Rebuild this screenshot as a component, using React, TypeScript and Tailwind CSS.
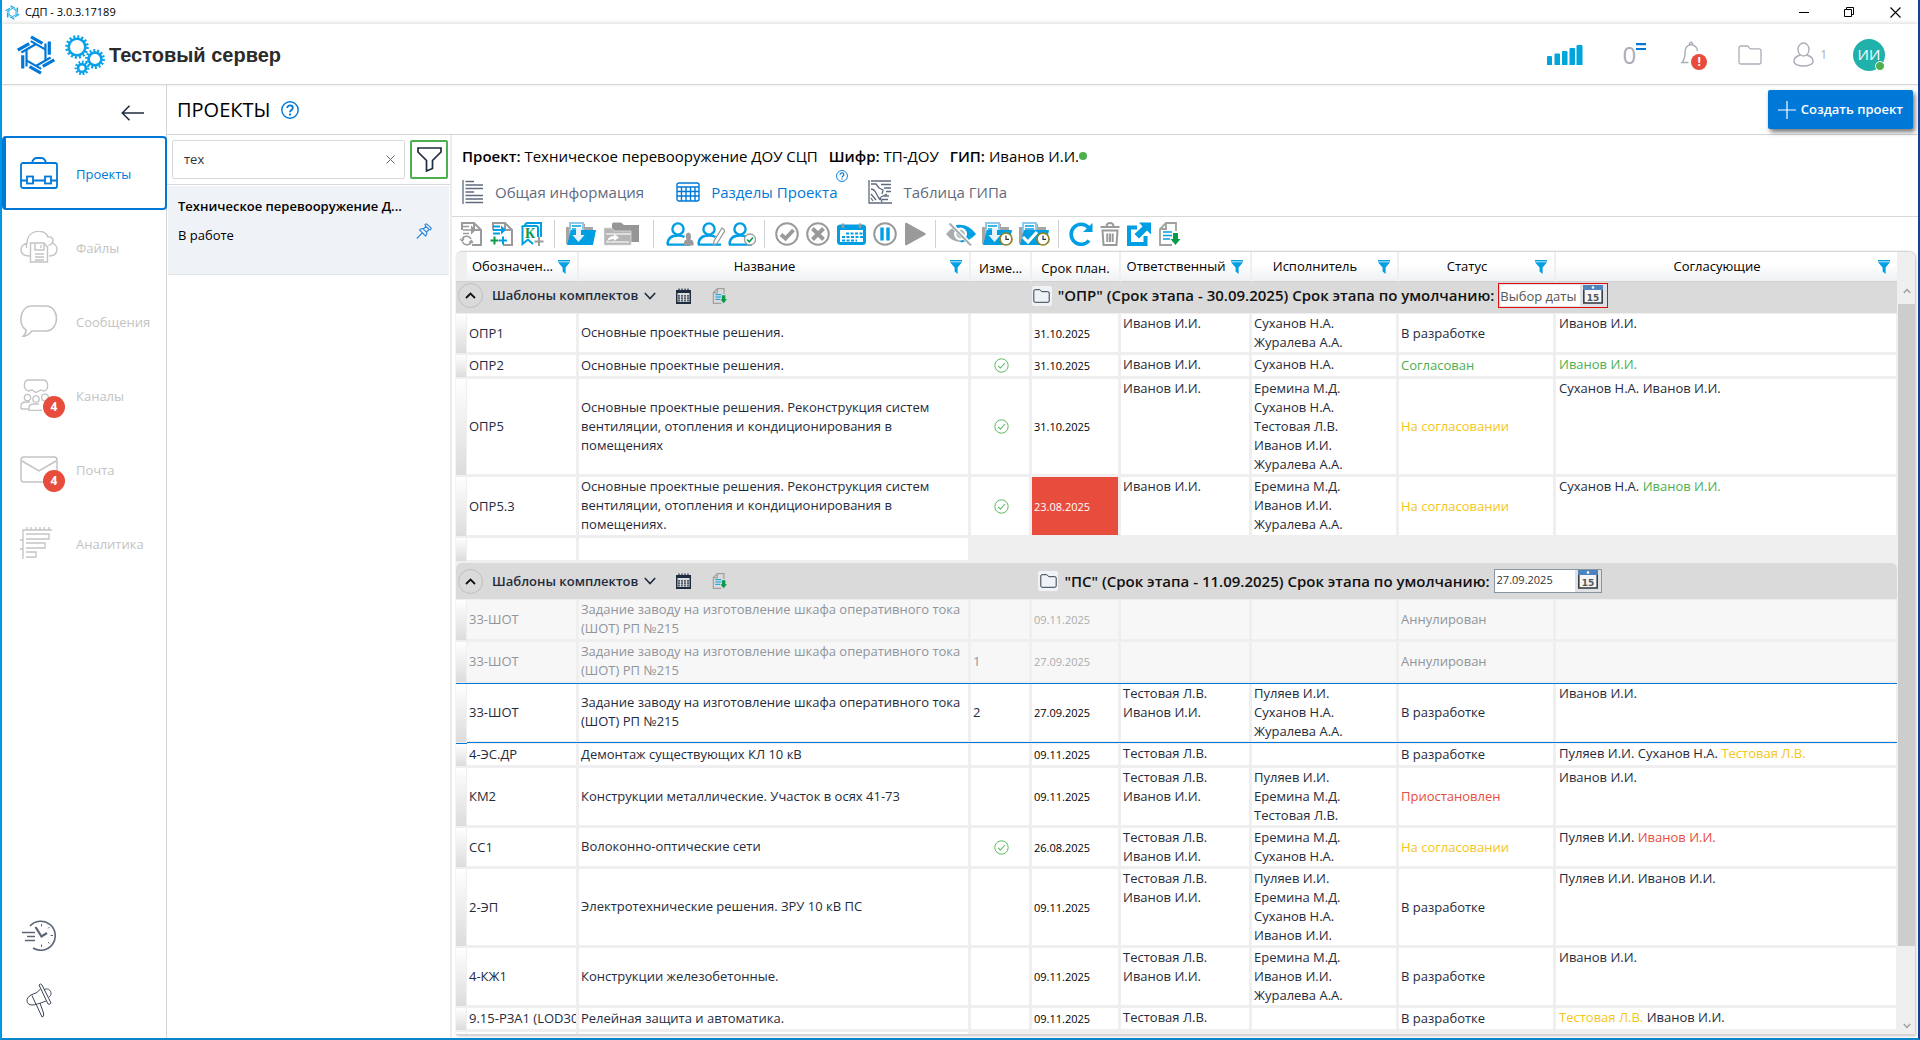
import { useState } from "react";
import type { ReactNode } from "react";

// Project sections screen: side nav, project list, sections table grouped by stage.

type Tone = "ok" | "wait" | "bad";
type Person = [string, Tone?];

interface Section {
  code: string;
  title: string;
  change?: string;
  approved?: boolean;
  due: string;
  overdue?: boolean;
  owners: string[];
  workers: string[];
  status: string;
  statusTone?: Tone;
  approvers: Person[];
  cancelled?: boolean;
  selected?: boolean;
}

const TONE: Record<Tone, string> = {
  ok: "text-[#4caf50]",
  wait: "text-[#f5c518]",
  bad: "text-[#e84c3d]",
};

const IV = "Иванов И.И.";
const SU = "Суханов Н.А.";
const ZH = "Журалева А.А.";
const ER = "Еремина М.Д.";
const TE = "Тестовая Л.В.";
const PU = "Пуляев И.И.";

const OPR: Section[] = [
  { code: "ОПР1", title: "Основные проектные решения.", due: "31.10.2025", owners: [IV], workers: [SU, ZH], status: "В разработке", approvers: [[IV]] },
  { code: "ОПР2", title: "Основные проектные решения.", approved: true, due: "31.10.2025", owners: [IV], workers: [SU], status: "Согласован", statusTone: "ok", approvers: [[IV, "ok"]] },
  { code: "ОПР5", title: "Основные проектные решения. Реконструкция систем вентиляции, отопления и кондиционирования в помещениях", approved: true, due: "31.10.2025", owners: [IV], workers: [ER, SU, TE, IV, ZH], status: "На согласовании", statusTone: "wait", approvers: [[SU], [IV]] },
  { code: "ОПР5.3", title: "Основные проектные решения. Реконструкция систем вентиляции, отопления и кондиционирования в помещениях.", approved: true, due: "23.08.2025", overdue: true, owners: [IV], workers: [ER, IV, ZH], status: "На согласовании", statusTone: "wait", approvers: [[SU], [IV, "ok"]] },
];

const SHOT = "Задание заводу на изготовление шкафа оперативного тока (ШОТ) РП №215";

const PS: Section[] = [
  { code: "33-ШОТ", title: SHOT, due: "09.11.2025", owners: [], workers: [], status: "Аннулирован", approvers: [], cancelled: true },
  { code: "33-ШОТ", title: SHOT, change: "1", due: "27.09.2025", owners: [], workers: [], status: "Аннулирован", approvers: [], cancelled: true },
  { code: "33-ШОТ", title: SHOT, change: "2", due: "27.09.2025", owners: [TE, IV], workers: [PU, SU, ZH], status: "В разработке", approvers: [[IV]], selected: true },
  { code: "4-ЭС.ДР", title: "Демонтаж существующих КЛ 10 кВ", due: "09.11.2025", owners: [TE], workers: [], status: "В разработке", approvers: [[PU], [SU], [TE, "wait"]] },
  { code: "КМ2", title: "Конструкции металлические. Участок в осях 41-73", due: "09.11.2025", owners: [TE, IV], workers: [PU, ER, TE], status: "Приостановлен", statusTone: "bad", approvers: [[IV]] },
  { code: "СС1", title: "Волоконно-оптические сети", approved: true, due: "26.08.2025", owners: [TE, IV], workers: [ER, SU], status: "На согласовании", statusTone: "wait", approvers: [[PU], [IV, "bad"]] },
  { code: "2-ЭП", title: "Электротехнические решения. ЗРУ 10 кВ ПС", due: "09.11.2025", owners: [TE, IV], workers: [PU, ER, SU, IV], status: "В разработке", approvers: [[PU], [IV]] },
  { code: "4-КЖ1", title: "Конструкции железобетонные.", due: "09.11.2025", owners: [TE, IV], workers: [ER, IV, ZH], status: "В разработке", approvers: [[IV]] },
  { code: "9.15-РЗА1 (LOD300)", title: "Релейная защита и автоматика.", due: "09.11.2025", owners: [TE], workers: [], status: "В разработке", approvers: [[TE, "wait"], [IV]] },
];

// ---------- icons ----------

const TURNS = [0, 60, 120, 180, 240, 300];

// six identical blades, each one overhanging the previous
function Logo({ className }: { className: string }) {
  return (
    <svg viewBox="-20 -20 40 40" className={className} fill="none" stroke="currentColor" aria-hidden="true">
      {TURNS.map((a) => (
        <g key={a} transform={`rotate(${a})`}>
          <path d="M-5 -18.2 L6.5 -11.6" strokeWidth="3.2" />
          <path d="M-5.2 -13.9 L9.6 -5.4" strokeWidth="2.2" />
        </g>
      ))}
    </svg>
  );
}

function Gear({ cx, cy, r, teeth }: { cx: number; cy: number; r: number; teeth: number }) {
  const step = (2 * Math.PI * (r + 2)) / teeth;
  return (
    <g>
      <circle cx={cx} cy={cy} r={r} strokeWidth="2.6" />
      <circle cx={cx} cy={cy} r={r + 2} strokeWidth="3" strokeDasharray={`${step * 0.5} ${step * 0.5}`} />
    </g>
  );
}

function Gears() {
  return (
    <svg viewBox="0 0 40 40" className="size-10" fill="none" stroke="#0aa1e8" aria-hidden="true">
      <Gear cx={12} cy={12} r={8.3} teeth={16} />
      <Gear cx={30} cy={24} r={6.4} teeth={14} />
      <Gear cx={17} cy={33} r={3.9} teeth={11} />
    </svg>
  );
}

function Ic({ w, h = 24, children, stroke = "none", sw = 2 }: { w: number; h?: number; children: ReactNode; stroke?: string; sw?: number }) {
  return (
    <svg width={w} height={h} viewBox={`0 0 ${w} ${h}`} fill="none" stroke={stroke} strokeWidth={sw} aria-hidden="true" className="shrink-0">
      {children}
    </svg>
  );
}

const G = "#9a9a9a";
const B = "#009fe3";
const D = "#1f2c3d";

function Help({ size }: { size: number }) {
  return (
    <svg width={size} height={size} viewBox="0 0 18 18" fill="none" stroke="#0078d7" aria-hidden="true">
      <circle cx="9" cy="9" r="8.2" strokeWidth="1.4" />
      <path d="M6.2 7 C6.2 3.6 11.8 3.6 11.8 7 C11.8 8.9 9 9 9 11.2" strokeWidth="1.8" />
      <path d="M9 12.6 V14.4" strokeWidth="1.9" />
    </svg>
  );
}

function Funnel() {
  return (
    <svg width="12" height="14" viewBox="0 0 12 14" fill={B} aria-hidden="true" className="shrink-0">
      <path d="M0 0 H12 V1.4 H0 Z M0 2.2 H12 L7.6 7.4 V14 L4.6 11.6 V7.4 Z" />
    </svg>
  );
}

function FolderOutline({ w, h, color }: { w: number; h: number; color: string }) {
  return (
    <svg width={w} height={h} viewBox="0 0 24 20" fill="none" stroke={color} strokeWidth="1.3" aria-hidden="true">
      <path d="M1 3 Q1 1 3 1 H9 Q10.5 1 11 2.4 Q11.6 3.8 13 3.8 H21 Q23 3.8 23 5.8 V17 Q23 19 21 19 H3 Q1 19 1 17 Z" />
    </svg>
  );
}

function PageCorner({ color }: { color: string }) {
  return <path d="M3 8 V1 H15 L22 8 V23 H13 M15 1 V8 H22" stroke={color} strokeWidth="2" />;
}

function FolderDoc({ w, check }: { w: number; check?: boolean }) {
  return (
    <Ic w={w}>
      <path d="M1 5 H5 V2 H20 V5 H28 V22 H1 Z" fill="#a5a5a5" />
      <path d="M5 1 H18 V10 H5 Z" fill="#fff" stroke="#8cc9ea" />
      <path d="M7 4 H16 M7 7 H16" stroke={B} strokeWidth="1.6" />
      <path d="M6 8 H31 L28 23 H2 Z" fill={B} />
      {check ? (
        <path d="M5 15 L10 20 L19 10" stroke="#fff" strokeWidth="3" />
      ) : (
        <path d="M11 6 H16 V13 H19.5 L13.5 20 L7.5 13 H11 Z" fill="#e8f4fb" />
      )}
    </Ic>
  );
}

function ClockBadge({ children }: { children: ReactNode }) {
  return (
    <span className="relative">
      {children}
      <svg width="14" height="14" viewBox="0 0 14 14" fill="#fff" stroke="#8c8226" className="absolute right-0 bottom-0" aria-hidden="true">
        <circle cx="7" cy="7" r="6" strokeWidth="1.7" />
        <path d="M7 3.5 V7.4 H10" stroke="#333" strokeWidth="1.2" />
      </svg>
    </span>
  );
}

function UserBlue({ children }: { children: ReactNode }) {
  return (
    <Ic w={28} stroke={B} sw={2.4}>
      <circle cx="12" cy="7" r="5.6" />
      <path d="M1.5 22.5 C1.5 16 5 13.5 12 13.5 C15 13.5 17 14 18.5 15 M1 22.6 H24" />
      {children}
    </Ic>
  );
}

function DocDown({ size }: { size: number }) {
  return (
    <svg width={size} height={size} viewBox="0 0 22 24" fill="none" aria-hidden="true" className="shrink-0">
      <path d="M17 9 V1 H7 L1 7 V23 H13 M7 1 V7 H1" stroke="#a0a0a0" strokeWidth="1.8" />
      <path d="M4 10 H13 M4 13.5 H13 M4 17 H11" stroke={B} strokeWidth="1.5" />
      <path d="M14 11 H19 V17 H21.5 L16.5 23 L11.5 17 H14 Z" fill="#0a9a4a" />
    </svg>
  );
}

function CalendarDark() {
  return (
    <Ic w={15} h={16}>
      <path d="M0.5 3 H14.5 V15 H0.5 Z" fill="#dbdbdb" stroke={D} />
      <path d="M0 2 H15 V5 H0 Z" fill={D} />
      <path d="M3 0.5 V3 M6 0.5 V3 M9 0.5 V3 M12 0.5 V3" stroke={D} strokeWidth="1.2" />
      <path d="M3 7 V13.5 M6 7 V13.5 M9 7 V13.5 M12 7 V13.5" stroke={D} strokeWidth="1.4" strokeDasharray="1.8 0.5" />
    </Ic>
  );
}

function ApprovedMark() {
  return (
    <svg width="15" height="15" viewBox="0 0 15 15" fill="none" stroke="#5cb860" className="mx-auto" role="img" aria-label="Согласовано">
      <circle cx="7.5" cy="7.5" r="6.7" strokeWidth="1" />
      <path d="M4 7.8 L6.4 10 L11 5" strokeWidth="1.1" />
    </svg>
  );
}

// ---------- side nav ----------

const NAV_ICONS: Record<string, ReactNode> = {
  projects: (
    <Ic w={38} h={32} stroke="currentColor" sw={1.8}>
      <rect x="1" y="6" width="36" height="25" rx="2" />
      <path d="M12 6 Q13 1 17 1 H21 Q25 1 26 6 M1 23.5 H7 M13 23.5 H25 M31 23.5 H37" />
      <rect x="7" y="19.5" width="6" height="7" />
      <rect x="25" y="19.5" width="6" height="7" />
    </Ic>
  ),
  files: (
    <Ic w={38} h={32} stroke="currentColor" sw={1.4}>
      <path d="M10 25 C-2 25 -1 13 7 12.5 C7 -2 25 -3 28 6 C33 5 34 10 32 12 C39 14 39 25 29 25 M7 12.5 C6 14 6 15.500 7 17 M32 12 Q31 14 28.500 14.500" />
      <path d="M10.500 12 H24 L27.500 16 V31 H10.500 Z M15 12 V19 H24 V12 M21 14 V17 M15 23 H24 M15 26 H24 M15 29 H24" />
    </Ic>
  ),
  messages: (
    <Ic w={38} h={32} stroke="currentColor" sw={1.6}>
      <path d="M12 1 H26 C40 1 40 26 26 26 H12 Q8 31 3 31.5 Q6 29 6 25 C-2 21 -1 1 12 1 Z" />
    </Ic>
  ),
  channels: (
    <Ic w={38} h={32} stroke="currentColor" sw={1.3}>
      <path d="M9 1 H23 C29 1 29 11 24 12 L21 11 L16 13.5 L12 11 L8 12 C3 10 3 1 9 1 Z" />
      <circle cx="7.5" cy="18.5" r="3.2" />
      <circle cx="16" cy="20" r="3.2" />
      <circle cx="25" cy="18.5" r="3.4" />
      <path d="M1 30 V27 Q1 23 6 23 H10 M1 30 H9 M9 32 V29 Q9 25 14 25 H19 M9 31.4 H22" />
    </Ic>
  ),
  mail: (
    <Ic w={38} h={27} stroke="currentColor" sw={1.5}>
      <rect x="1" y="1" width="36" height="25" rx="3" />
      <path d="M2 5 L19 15 L36 5" />
    </Ic>
  ),
  analytics: (
    <Ic w={38} h={32} stroke="currentColor" sw={1.3}>
      <path d="M3 32 V3 H32 M7 0 V3 M11 0 V3 M16 0 V3 M20 0 V3 M24 0 V3 M29 0 V3 M0 13 H3 M0 22 H3" />
      <path d="M6 7 H29 V12 H6 M6 16 H25 V21 H6 M6 25 H16 V30 H6" />
    </Ic>
  ),
};

const NAV = [
  { id: "projects", label: "Проекты" },
  { id: "files", label: "Файлы" },
  { id: "messages", label: "Сообщения" },
  { id: "channels", label: "Каналы", badge: 4 },
  { id: "mail", label: "Почта", badge: 4 },
  { id: "analytics", label: "Аналитика" },
];

function SideNav() {
  const [active, setActive] = useState("projects");
  return (
    <nav className="flex w-[165px] shrink-0 flex-col border-r border-[#d5d5d5]">
      <div className="flex h-[51px] items-center justify-end pt-1 pr-[22px]">
        <button type="button" aria-label="Свернуть меню">
          <Ic w={23} h={16} stroke={D} sw={1.6}>
            <path d="M23 8 H1.5 M8.5 0.8 L1.3 8 L8.5 15.2" />
          </Ic>
        </button>
      </div>
      {NAV.map((n) => (
        <button
          key={n.id}
          type="button"
          onClick={() => setActive(n.id)}
          className={
            "-mr-px flex h-[74px] items-center text-[13px] " +
            (active === n.id
              ? "rounded border-2 border-l-4 border-[#0078d7] pl-[14px] text-[#0078d7]"
              : "pl-[18px] text-[#c3c3c3]")
          }
        >
          <span className="relative flex h-8 w-[56px] items-center">
            {NAV_ICONS[n.id]}
            {n.badge && (
              <span className="absolute top-[17px] left-[23px] flex size-[22px] items-center justify-center rounded-full bg-[#e84c3d] text-xs font-bold text-white">
                {n.badge}
              </span>
            )}
          </span>
          <span className="pt-[3px]">{n.label}</span>
        </button>
      ))}
      <div className="mt-auto flex flex-col items-start gap-8 pb-5 pl-5">
        <button type="button" aria-label="История">
          <Ic w={36} h={31} stroke="#5b6577" sw={1.6}>
            <path d="M8 6 A14.5 14.5 0 1 1 11 28" />
            <path d="M0 12.5 H13 M5 16.5 H13 M3 20.5 H13" />
            <path d="M13.5 7 L19.5 16.5 L25 13" strokeWidth="2.2" />
            <path d="M19.5 4 V6.5 M19.5 24.5 V27 M28.5 15.5 H31 M26 8.5 L27.5 7 M26 22 L27.5 23.5" strokeWidth="1" />
          </Ic>
        </button>
        <button type="button" aria-label="Новости" className="pl-1">
          <Ic w={27} h={35} stroke="#3b4657" sw={1}>
            <path d="M13 2 Q14.5 0 16 2 L25 20 Q24 22 22 21 Z M14.5 6 Q12 10 5 12 C-1 15 0 22 6 22 Q10 22 20 18 M6 12.5 L10 21.5" />
            <path d="M18 7 C23 3 28 11 23 14" />
            <path d="M10 21 L16 34 Q18.5 34 17.5 30 L14 20" />
          </Ic>
        </button>
      </div>
    </nav>
  );
}

// ---------- top bars ----------

function TitleBar() {
  return (
    <div className="flex h-6 items-center pl-[3px]">
      <Logo className="size-[15px] text-[#13a9e8]" />
      <span className="pl-[5px] text-[11px] text-black">СДП - 3.0.3.17189</span>
      <div className="ml-auto flex items-center gap-[35px] pr-[17px]">
        <button type="button" aria-label="Свернуть"><Ic w={10} h={11} stroke="#000" sw={1}><path d="M0 5.5 H10" /></Ic></button>
        <button type="button" aria-label="Восстановить"><Ic w={11} h={11} stroke="#000" sw={1}><path d="M0.5 2.5 H7.5 V9.5 H0.5 Z M2.5 2.5 V0.5 H9.5 V7.5 H7.5" /></Ic></button>
        <button type="button" aria-label="Закрыть"><Ic w={11} h={11} stroke="#000" sw={1.1}><path d="M0.5 0.5 L10.5 10.5 M10.5 0.5 L0.5 10.5" /></Ic></button>
      </div>
    </div>
  );
}

function Header() {
  return (
    <header className="z-10 flex h-[61px] items-center border-b border-[#d5d5d5] pt-px pl-[14px] shadow-[0_-1px_4px_rgba(0,0,0,0.15)]">
      <Logo className="size-10 text-[#0078d7]" />
      <span className="pl-[9px]"><Gears /></span>
      <span className="pl-1 font-['Liberation_Sans',sans-serif] text-xl font-bold text-[#2b2b2b]">Тестовый сервер</span>
      <div className="ml-auto flex items-center pr-[33px]">
        <Ic w={36} h={20}>
          <path d="M0 12 Q0 11 1 11 H4 Q5 11 5 12 V20 H0 Z M7.5 9.5 Q7.5 8.5 8.5 8.5 H12 Q13 8.5 13 9.5 V20 H7.5 Z M15 7 Q15 6 16 6 H19.5 Q20.5 6 20.5 7 V20 H15 Z M22.5 4 Q22.5 3 23.5 3 H27 Q28 3 28 4 V20 H22.5 Z M29.5 1 Q29.5 0 30.5 0 H34.5 Q35.5 0 35.5 1 V20 H29.5 Z" fill="#00a5dc" />
        </Ic>
        <div className="flex pl-[39px]">
          <span className="text-2xl leading-6 text-[#a9acb6]">0</span>
          <Ic w={10} h={8} stroke="#0078d7" sw={2.2}><path d="M0 1.2 H10 M0 6 H10" /></Ic>
        </div>
        <button type="button" aria-label="Уведомления" className="relative ml-[35px]">
          <Ic w={26} h={27} stroke="#a9aeb8" sw={1.4}>
            <path d="M7.5 21.5 H1 Q4 18 4 12 C4 7 6 4 10 3.5 C14 4 16.5 7 16.5 10 M8.5 3.5 C8 0.5 12 0.5 11.5 3.5" />
          </Ic>
          <span className="absolute right-0 -bottom-0.5 flex size-4 items-center justify-center rounded-full bg-[#e84c3d] text-xs font-bold text-white">!</span>
        </button>
        <button type="button" aria-label="Файлы проекта" className="ml-[31px]"><FolderOutline w={24} h={20} color="#a9aeb8" /></button>
        <button type="button" className="ml-[31px] flex items-center gap-1.5 text-xs text-[#a9aeb8]">
          <Ic w={21} h={25} stroke="#a9aeb8" sw={1.4}>
            <ellipse cx="10.5" cy="7.5" rx="5.5" ry="6.5" />
            <path d="M7.5 13 Q1 14.5 1 19.5 C1 25.5 20 25.5 20 19.5 Q20 14.5 13.5 13" />
          </Ic>
          1
        </button>
        <div className="relative ml-[26px] flex size-8 items-center justify-center rounded-full bg-[#20b2aa] text-[15px] text-white">
          ИИ
          <span className="absolute right-0 bottom-0 size-2.5 rounded-full border border-white bg-[#4caf50]" />
        </div>
      </div>
    </header>
  );
}

// ---------- project list ----------

function ProjectList() {
  const [query, setQuery] = useState("тех");
  return (
    <aside className="flex w-[285px] shrink-0 flex-col border-r-2 border-[#ececec]">
      <div className="flex gap-[5px] border-b border-[#d8d8d8] py-[5px] pr-0.5 pl-[5px]">
        <div className="flex h-[39px] min-w-0 flex-1 items-center rounded-xs border border-[#d8d8d8] pr-[9px] pl-[11px]">
          <input
            aria-label="Поиск проекта"
            value={query}
            onChange={(e) => setQuery(e.target.value)}
            className="min-w-0 flex-1 text-[13px] text-[#333] outline-none"
          />
          <button type="button" aria-label="Очистить" onClick={() => setQuery("")}>
            <Ic w={9} h={9} stroke="#666" sw={1}><path d="M0.5 0.5 L8.5 8.5 M8.5 0.5 L0.5 8.5" /></Ic>
          </button>
        </div>
        <button type="button" aria-label="Фильтр" className="flex h-[39px] w-[38px] items-center justify-center rounded-xs border-2 border-[#4caf50]">
          <Ic w={25} h={25} stroke={D} sw={1.7}><path d="M1 1 H24 V5 L15.5 13.5 V21.5 L9.5 24 V13.5 L1 5 Z" /></Ic>
        </button>
      </div>
      <article className="mx-px mt-px flex h-[89px] flex-col gap-[9px] border-b border-[#e4e6ea] bg-[#eff2f7] pt-[10px] pr-[17px] pl-[10px] text-[13px] leading-5 text-black">
        <h2 className="font-semibold whitespace-nowrap">Техническое перевооружение Д...</h2>
        <div className="flex items-center justify-between">
          В работе
          <button type="button" aria-label="Открепить" className="-mt-2">
            <Ic w={16} h={16} stroke="#2a86d8" sw={1.1}>
              <path d="M9 1.5 L10.5 0.8 L15.3 5.2 L14.5 6.8 L13 6.5 L10.5 9 Q11.5 11.5 9.5 13 L3.5 7 Q5 5 7.5 5.8 L9.8 3.3 Z M6.3 9.8 L0.8 15.5 M7 5.8 L10.5 9 M9.8 3.3 L13 6.5" />
            </Ic>
          </button>
        </div>
      </article>
    </aside>
  );
}

// ---------- project header ----------

function Tabs() {
  return (
    <div className="flex items-center text-[15px] leading-6 text-[#5f6b7d]">
      <button type="button" className="flex items-center gap-[11px]">
        <Ic w={22} h={24} stroke="#5f6b7d" sw={1.3}>
          <path d="M1 0 V24 M3.5 1.5 H12 M3.5 5 H21 M3.5 8.5 H21 M3.5 12 H12 M3.5 15.5 H21 M3.5 19 H21 M3.5 22.5 H21" />
        </Ic>
        Общая информация
      </button>
      <button type="button" aria-current="page" className="ml-8 flex items-center gap-[11px] text-[#0078d7]">
        <Ic w={24} h={20} stroke="#0078d7" sw={1.4}>
          <rect x="1" y="1" width="22" height="18" rx="2" />
          <path d="M1 5 H23 M1 9.5 H23 M1 14 H23 M5.5 5 V19 M10 5 V19 M14.5 5 V19 M19 5 V19" />
        </Ic>
        Разделы Проекта
      </button>
      <button type="button" aria-label="Справка" className="-mt-8 -ml-px"><Help size={12} /></button>
      <button type="button" className="ml-5 flex items-center gap-[11px]">
        <Ic w={24} h={24} stroke="#5f6b7d" sw={1.3}>
          <path d="M1 0 V23 H24 M3 1 H23 M13 4.5 H23 M16 8 H23 M18 11.5 H23 M16 16 H21 M14 19.5 H20" />
          <path d="M3 4 H8 L11 8 L15 10 L14 14 M3 9 Q6 9 8 13 T12 20 M3 14 L8 20 M3 18 L5 21 M19 14 L13 17 M12 17 L14 22" />
        </Ic>
        Таблица ГИПа
      </button>
    </div>
  );
}

function ProjectHeader() {
  return (
    <div className="flex h-[82px] flex-col gap-3 border-b border-[#d8d8d8] pt-[9px] pl-[10px]">
      <div className="flex items-center gap-[11px] text-[15px] leading-6 text-black">
        <span><b className="font-semibold">Проект:</b> Техническое перевооружение ДОУ СЦП</span>
        <span><b className="font-semibold">Шифр:</b> ТП-ДОУ</span>
        <span className="flex items-center gap-1">
          <b className="font-semibold">ГИП:</b> Иванов И.И.
          <span className="-ml-1 size-2 rounded-full bg-[#4caf50]" />
        </span>
      </div>
      <Tabs />
    </div>
  );
}

// ---------- toolbar ----------

const TOOL_GROUPS: { cls: string; items: [string, ReactNode][] }[] = [
  {
    cls: "gap-[7px] pl-[7px] pr-[9px]",
    items: [
      ["Обновить комплект", <Ic key="a" w={24}><PageCorner color={G} /><path d="M4 4.5 H10 M4 8 H12 M4 11.5 H10" stroke={G} strokeWidth="1.5" /><path d="M12 3.5 V12.5 L17 8 Z" fill={G} /><path d="M3 17 A5 5 0 0 1 12 17 M12.5 20 A5 5 0 0 1 3.5 20 M1 17 L3.2 19 L5 16.5 M10 20.5 L12.5 18.5 L14 21" stroke={G} strokeWidth="1.4" /></Ic>],
      ["Добавить комплекты", <Ic key="b" w={24}><PageCorner color={G} /><path d="M3 4.5 H10 M3 8 H12 M3 11.5 H10" stroke={B} strokeWidth="1.8" /><path d="M11 3.5 V12.5 L16 8 Z" fill={B} /><path d="M4.5 14.5 V22.5 M0.5 18.5 H8.5" stroke="#0a9a4a" strokeWidth="2" /><path d="M13 14.5 V22.5 M9 18.5 H17" stroke={B} strokeWidth="2" /></Ic>],
      ["Новый комплект", <Ic key="c" w={24}><path d="M4 4 Q4 1 7 1 H20 V15 M1 5 Q1 4 3 4 H15 Q17 4 17 6 V15 M1.5 5 V22 L7 17.5 L12 22" stroke={B} strokeWidth="2" /><text x="4" y="16" fontSize="14" fontWeight="bold" fill="#0a9a4a" fontFamily="Liberation Serif, serif">К</text><path d="M18 15 V24 M13.5 19.5 H22.5" stroke={G} strokeWidth="2" /></Ic>],
    ],
  },
  {
    cls: "gap-[7px] pl-[10px] pr-[14px]",
    items: [
      ["Загрузить в папку", <FolderDoc key="d" w={32} />],
      ["Переместить в папку", <Ic key="e" w={35}><path d="M8 2 Q8 0.5 10 0.5 H17 L20 3 H35 V20 H8 Z" fill="#969696" /><path d="M0 6 H8 L10 9 H27 V23 H0 Z" fill="#b5b5b5" stroke="#ddd" strokeWidth="0.8" /><path d="M2 12 H27 M2 20 H25" stroke="#dedede" /><path d="M3 19 Q5 14 10 14 V12 L15 15.5 L10 19 V17 Q6 17 3 19 Z" fill="#fff" /></Ic>],
    ],
  },
  {
    cls: "gap-[3px] pl-3 pr-2",
    items: [
      ["Ответственный", <UserBlue key="f"><path d="M18 23.5 V21 Q18 18 20.5 17.5 Q18.5 11 22.5 10.5 Q26 11 24.5 17.5 Q27.5 18 27.5 21 V23.5 Z" fill="#9a9a9a" stroke="none" /></UserBlue>],
      ["Исполнитель", <UserBlue key="g"><path d="M25 6 L28 8.5 L20 21.5 L16.5 22.5 L17 19 Z" stroke={G} strokeWidth="1.3" fill="#fff" /></UserBlue>],
      ["Согласующий", <UserBlue key="h"><circle cx="22" cy="17.5" r="5.5" stroke={G} strokeWidth="1.3" fill="#fff" /><path d="M19 17.5 L21.3 19.8 L25 15.5" stroke="#0a9a4a" strokeWidth="1.6" /></UserBlue>],
    ],
  },
  {
    cls: "gap-[7px] pl-[10px] pr-[9px]",
    items: [
      ["Согласовать", <Ic key="i" w={24} stroke={G} sw={2}><circle cx="12" cy="12" r="10.8" /><path d="M6 12.5 L10.5 16.5 L18.5 8" strokeWidth="4" /></Ic>],
      ["Отклонить", <Ic key="j" w={24} stroke={G} sw={2}><circle cx="12" cy="12" r="10.8" /><path d="M6.5 6.5 L17.5 17.5 M17.5 6.5 L6.5 17.5" strokeWidth="4" /></Ic>],
      ["Сроки", <Ic key="k" w={29}><rect x="1.5" y="4" width="26" height="17.5" rx="2" stroke={B} strokeWidth="3" /><path d="M0 4 H29 V8 H0 Z" fill={B} /><path d="M6 1.5 V6 M23 1.5 V6" stroke="#9a9a9a" strokeWidth="2.4" /><path d="M9 11.5 H26 M5 15 H26 M5 18.5 H20" stroke={B} strokeWidth="2" strokeDasharray="3 1.5" /></Ic>],
      ["Приостановить", <Ic key="l" w={24}><circle cx="12" cy="12" r="10.8" stroke={G} strokeWidth="2" /><path d="M9 5.5 V18.5 M15 5.5 V18.5" stroke={B} strokeWidth="3.4" /></Ic>],
      ["Возобновить", <Ic key="m" w={22}><path d="M1 2 Q1 0 3 1 L21 11 Q22.5 12 21 13 L3 23 Q1 24 1 22 Z" fill="#9a9a9a" /></Ic>],
    ],
  },
  {
    cls: "gap-[5px] pl-[10px] pr-2",
    items: [
      ["Скрыть", <Ic key="n" w={30}><path d="M0 12 Q7 3 15 3.5 V20 Q6 20 0 12 Z" fill="#a8adad" /><path d="M10 3 Q22 1 30 12 Q24 19 15 20.5 Z" fill={B} /><circle cx="14.5" cy="12" r="6.5" fill="#fff" /><circle cx="14.5" cy="12" r="4.2" fill="#b0bcc2" /><path d="M4 1 L25 23" stroke="#fff" strokeWidth="4" /><path d="M3.5 1.5 L25 23.5" stroke="#a8adad" strokeWidth="2" /></Ic>],
      ["Отложенная загрузка", <ClockBadge key="o"><FolderDoc w={32} /></ClockBadge>],
      ["Отложенное согласование", <ClockBadge key="p"><FolderDoc w={32} check /></ClockBadge>],
    ],
  },
  {
    cls: "gap-[7px] pl-[10px]",
    items: [
      ["Обновить", <Ic key="q" w={24}><path d="M19.5 5.5 A10 10 0 1 0 20 18.5" stroke={B} strokeWidth="3.6" /><path d="M23.5 1 V10 H14 Z" fill={B} /></Ic>],
      ["Удалить", <Ic key="r" w={20} stroke={G} sw={2}><path d="M0.5 5 H19.5 M6.5 5 Q6.5 1 10 1 Q13.5 1 13.5 5 M2.5 8.5 H17.5 L16.5 23 H3.5 Z M7.3 11.5 V20 M10 11.5 V20 M12.7 11.5 V20" /></Ic>],
      ["Открыть", <Ic key="s" w={24}><path d="M10 5.5 H2 V22 H18.5 V14" stroke={B} strokeWidth="4" /><path d="M12 0.5 H24 V12.5 L20 8.5 L12 16.5 L7.5 12 L15.5 4.5 Z" fill={B} /></Ic>],
      ["Выгрузить отчёт", <DocDown key="t" size={24} />],
    ],
  },
];

function Toolbar() {
  return (
    <div role="toolbar" className="flex h-[34px] items-center">
      {TOOL_GROUPS.map((g, i) => (
        <div key={i} className={"flex h-7 items-center border-[#d0d0d0] " + (i < TOOL_GROUPS.length - 1 ? "border-r " : "") + g.cls}>
          {g.items.map(([label, icon]) => (
            <button key={label} type="button" title={label} aria-label={label} className="flex">
              {icon}
            </button>
          ))}
        </div>
      ))}
    </div>
  );
}

// ---------- table ----------

const COLUMNS: { title: string; width: string; filter: boolean }[] = [
  { title: "Обозначен...", width: "w-[112px] border-r-2", filter: true },
  { title: "Название", width: "w-[392px] border-r-2", filter: true },
  { title: "Изме...", width: "w-[61px] border-r-2", filter: false },
  { title: "Срок план.", width: "w-[89px] border-r-2", filter: false },
  { title: "Ответственный", width: "w-[131px] border-r-2", filter: true },
  { title: "Исполнитель", width: "w-[147px] border-r-2", filter: true },
  { title: "Статус", width: "w-[157px] border-r-2", filter: true },
  { title: "Согласующие", width: "", filter: true },
];

function DateBox({ id, value, placeholder, alert }: { id: string; value?: string; placeholder?: string; alert?: boolean }) {
  return (
    <span className={"ml-1 flex items-start border bg-[#dfe1e4] " + (alert ? "h-[25px] border-[#e00b0b] p-px" : "h-6 border-[#8796a5]")}>
      <input
        id={id}
        defaultValue={value}
        placeholder={placeholder}
        className={"h-full w-20 bg-white font-normal text-[#333] outline-none placeholder:text-[#555] " + (alert ? "text-[13px]" : "pb-1 pl-0.5 text-[11px]")}
      />
      <button type="button" aria-label="Открыть календарь" className="mx-[3px]">
        <svg width="20" height="19" viewBox="0 0 20 19" aria-hidden="true">
          <rect x="0.8" y="1" width="18.4" height="17" fill="#f5f5f5" stroke="#3a3f46" strokeWidth="1.6" />
          <rect x="0" y="0" width="20" height="5" fill="#4d84bd" />
          <circle cx="10" cy="2.5" r="1.3" fill="#fff" />
          <text x="10" y="15.5" fontSize="9" fontWeight="bold" textAnchor="middle" fill="#555" fontFamily="DejaVu Sans, sans-serif">15</text>
        </svg>
      </button>
    </span>
  );
}

function GroupRow({ id, text, children, rounded }: { id: string; text: string; children: ReactNode; rounded?: boolean }) {
  return (
    <tr>
      <td colSpan={9} className="border-b border-[#efefef] bg-[#efefef] p-0">
        <div className={"flex items-center bg-[#dadada] " + (rounded ? "h-9 rounded-t-md" : "h-[31px] pb-1")}>
          <div className="flex w-[287px] items-center pl-0.5 text-[13px] font-semibold text-[#1f2c3d]">
            <button type="button" aria-label="Свернуть группу" className="flex size-[25px] items-center justify-center rounded-full border border-[#bfbfbf]">
              <Ic w={11} h={7} stroke="#111" sw={1.8}><path d="M1 6 L5.5 1.5 L10 6" /></Ic>
            </button>
            <button type="button" className="ml-[9px] flex items-center gap-[6px]">
              Шаблоны комплектов
              <Ic w={12} h={8} stroke={D} sw={1.6}><path d="M0.8 1 L6 6.5 L11.2 1" /></Ic>
            </button>
            <button type="button" aria-label="Календарь" className="ml-5"><CalendarDark /></button>
            <button type="button" aria-label="Отчёт" className="ml-[21px]"><DocDown size={16} /></button>
          </div>
          <div className="flex flex-1 items-center justify-center text-[15px] font-semibold text-[#111]">
            <span className="mr-[6px] flex size-5 items-center justify-center rounded-xs bg-[#eff2f7]"><FolderOutline w={17} h={14} color={D} /></span>
            <label htmlFor={id}>{text}</label>
            {children}
          </div>
        </div>
      </td>
    </tr>
  );
}

const LAST = "border-b-[3px] border-[#efefef] py-0 pr-0 pl-0.5 ";
const CELL = LAST + "border-r-[3px] ";
const STUB = "border-r border-b-2 border-[#efefef] bg-linear-to-b from-white to-[#dcdcdc] p-0";

function SectionRow({ s }: { s: Section }) {
  // the selected row is framed by two thin lines lying over the cell gaps
  const frame = s.selected
    ? "relative before:absolute before:-top-px before:left-0 before:-right-[3px] before:h-px before:bg-[#0078d7] after:absolute after:-bottom-0.5 after:left-0 after:-right-[3px] after:h-px after:bg-[#0078d7] "
    : "";
  const tone = frame + (s.cancelled ? "bg-[#f7f7f7] " : "bg-white ");
  const cell = CELL + tone;
  return (
    <tr className={"h-6 " + (s.cancelled ? "text-[#8f959c]" : "text-[#1f2c3d]")}>
      <td className={STUB + " " + frame} />
      <td className={cell}><div className="overflow-hidden whitespace-nowrap">{s.code}</div></td>
      <td className={cell + "pb-px"}>{s.title}</td>
      <td className={cell}>{s.approved ? <ApprovedMark /> : s.change}</td>
      <td className={CELL + frame + "text-[11px] " + (s.overdue ? "bg-[#e84c3d] text-white" : s.cancelled ? "bg-[#f7f7f7] text-[#adadad]" : "bg-white text-black")}>{s.due}</td>
      <td className={cell + "align-top"}>{s.owners.map((p) => <div key={p}>{p}</div>)}</td>
      <td className={cell + "align-top"}>{s.workers.map((p) => <div key={p}>{p}</div>)}</td>
      <td className={cell + (s.statusTone ? TONE[s.statusTone] : "")}>{s.status}</td>
      <td className={LAST + tone + "border-r align-top"}>
        <div className="pl-px">
          {s.approvers.map(([name, t]) => (
            <span key={name} className={t ? TONE[t] : ""}>{name} </span>
          ))}
        </div>
      </td>
    </tr>
  );
}

function EmptyRow() {
  return (
    <tr className="h-[25px]">
      <td className={STUB} />
      <td className={CELL + "bg-white"} />
      <td className={CELL + "bg-white"} />
      <td colSpan={6} />
    </tr>
  );
}

function SectionsTable() {
  return (
    <div className="mr-[3px] mb-[3px] ml-1 flex min-h-0 flex-1 overflow-hidden rounded-t-md border-t border-b border-[#d5d5d5] bg-[#efefef] shadow-[1px_1px_3px_rgba(0,0,0,0.25)]">
      <div className="min-w-0 flex-1 overflow-hidden">
        <table className="w-full table-fixed border-separate border-spacing-0 text-[13px] leading-[19px]">
          <thead>
            <tr className="h-[30px]">
              <th className="w-[11px] border-b border-[#d0d0d0] bg-[#efefef] p-0" />
              {COLUMNS.map((c) => (
                <th key={c.title} className={"border-b border-r-[#efefef] border-b-[#d0d0d0] bg-linear-to-b from-white from-40% to-[#eff1f4] p-0 font-normal text-black " + c.width}>
                  <div className={"flex items-center " + (c.filter ? "pr-[7px]" : "px-2 pt-[3px]")}>
                    <span className="flex-1 text-center whitespace-nowrap">{c.title}</span>
                    {c.filter && <button type="button" aria-label={"Фильтр: " + c.title}><Funnel /></button>}
                  </div>
                </th>
              ))}
            </tr>
          </thead>
          <tbody>
            <GroupRow id="opr-date" text={'"ОПР" (Срок этапа - 30.09.2025) Срок этапа по умолчанию:'}>
              <DateBox id="opr-date" placeholder="Выбор даты" alert />
            </GroupRow>
            {OPR.map((s) => <SectionRow key={s.code} s={s} />)}
            <EmptyRow />
            <GroupRow id="ps-date" text={'"ПС" (Срок этапа - 11.09.2025) Срок этапа по умолчанию:'} rounded>
              <DateBox id="ps-date" value="27.09.2025" />
            </GroupRow>
            {PS.map((s, i) => <SectionRow key={i} s={s} />)}
            <EmptyRow />
          </tbody>
        </table>
      </div>
      <div className="flex w-[18px] shrink-0 flex-col bg-[#efefef] pl-px">
        <div className="flex h-[52px] items-end justify-center pb-[10px]"><Ic w={8} h={6} stroke="#a0a0a0" sw={1.5}><path d="M0.8 5 L4 1.5 L7.2 5" /></Ic></div>
        <div className="flex-1 bg-[#cdcdcd]" />
        <div className="flex h-[88px] items-end justify-center pb-[5px]"><Ic w={8} h={6} stroke="#a0a0a0" sw={1.5}><path d="M0.8 1 L4 4.5 L7.2 1" /></Ic></div>
      </div>
    </div>
  );
}

export default function App() {
  return (
    <div className="flex h-screen flex-col overflow-hidden border-r-2 border-b-2 border-l-2 border-r-[#12409a] border-b-[#0a86c8] border-l-[#0096e0] bg-white font-['Open_Sans','Noto_Sans',sans-serif]">
      <TitleBar />
      <Header />
      <div className="flex min-h-0 flex-1">
        <SideNav />
        <main className="flex min-w-0 flex-1 flex-col">
          <div className="flex h-[50px] items-center border-b border-[#d5d5d5] pr-[5px] pl-[10px]">
            <h1 className="text-xl text-black">ПРОЕКТЫ</h1>
            <button type="button" aria-label="Справка" className="ml-[11px]"><Help size={18} /></button>
            <button type="button" className="ml-auto flex h-[39px] items-center gap-[5px] rounded-xs bg-[#0078d7] px-[10px] text-[13px] font-semibold text-white shadow-[2px_3px_5px_rgba(0,0,0,0.55)]">
              <Ic w={18} h={18} stroke="#fff" sw={1.2}><path d="M9 0 V18 M0 9 H18" /></Ic>
              Создать проект
            </button>
          </div>
          <div className="flex min-h-0 flex-1">
            <ProjectList />
            <section className="flex min-w-0 flex-1 flex-col">
              <ProjectHeader />
              <Toolbar />
              <SectionsTable />
            </section>
          </div>
        </main>
      </div>
    </div>
  );
}
